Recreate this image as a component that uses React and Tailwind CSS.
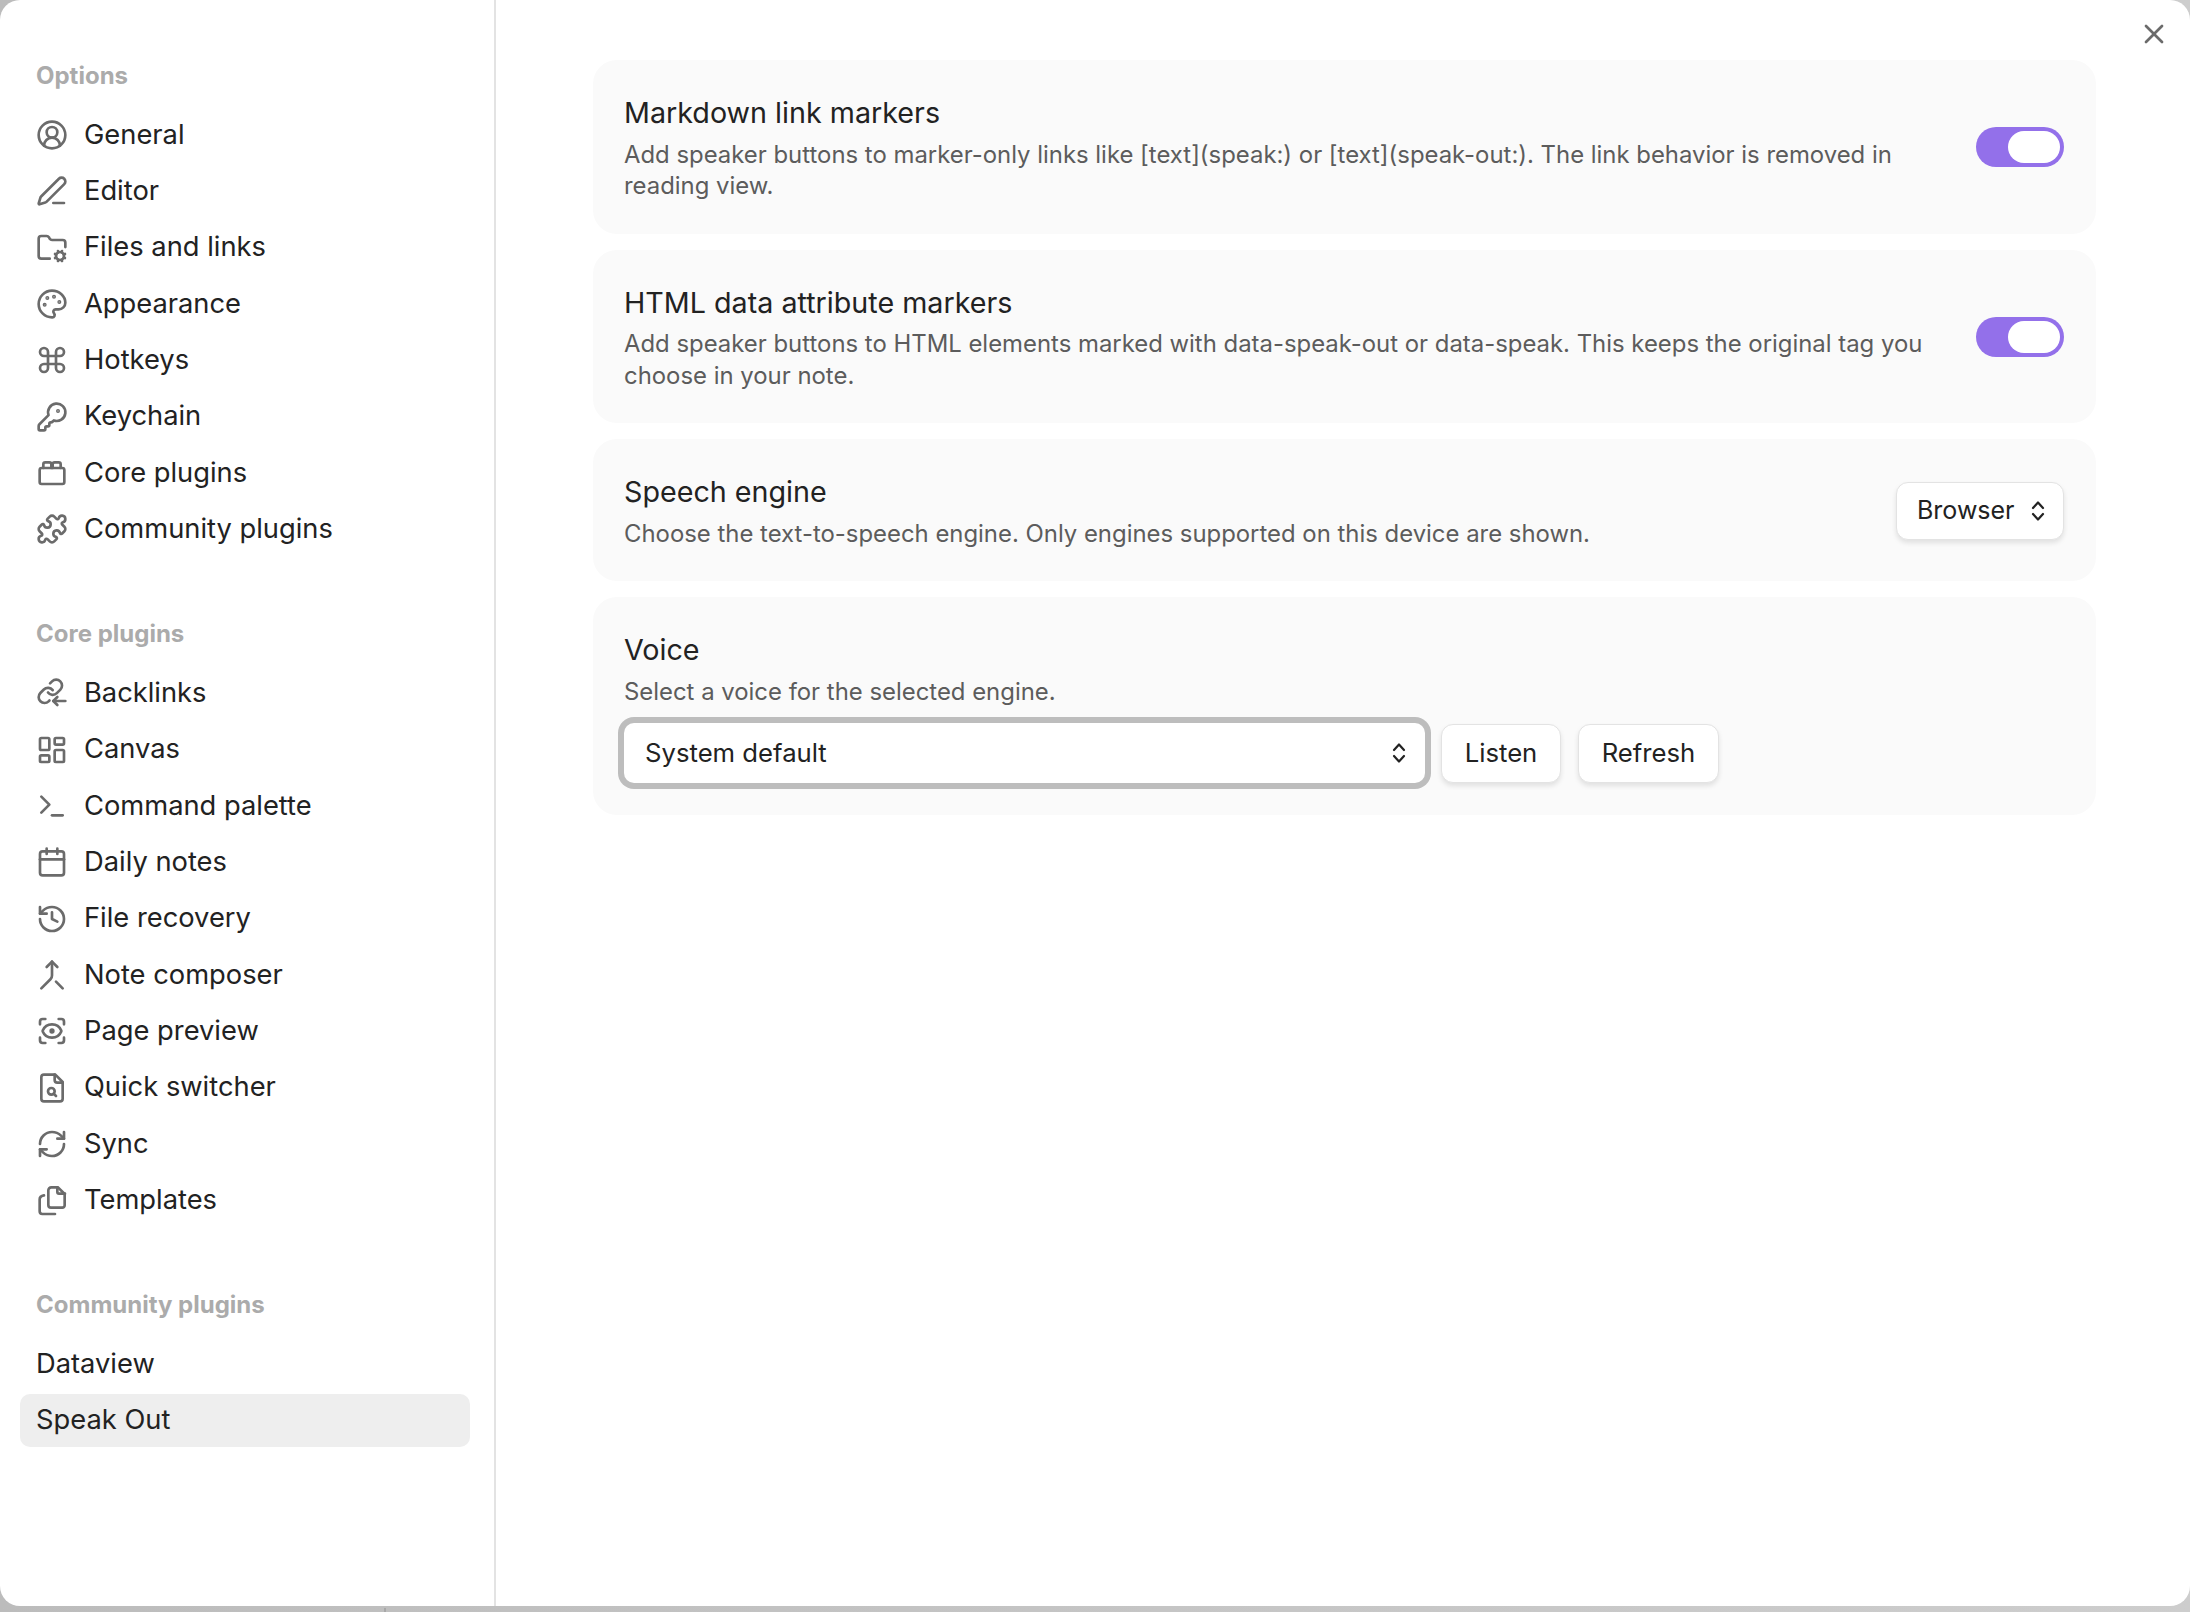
import React from 'react';
import {
  CircleUserRound, PenLine, FolderCog, Palette, Command, KeyRound, Puzzle,
  LayoutDashboard, Terminal, Calendar, History, Merge, ScanEye, RefreshCw, X,
} from 'lucide-react';

const Lego = ({ size, ...props }) => (
  <svg width={size} height={size} viewBox="0 0 24 24" fill="none" stroke="currentColor" strokeLinecap="round" strokeLinejoin="round" {...props}>
    <rect x="2.75" y="8.25" width="18.5" height="12" rx="1.5" />
    <path d="M5.5 8.25V5.5A1.5 1.5 0 0 1 7 4h3a1.5 1.5 0 0 1 1.5 1.5v2.75" />
    <path d="M12.5 8.25V5.5A1.5 1.5 0 0 1 14 4h3a1.5 1.5 0 0 1 1.5 1.5v2.75" />
  </svg>
);

const LinksComingIn = ({ size, strokeWidth, ...props }) => (
  <svg width={size} height={size} viewBox="0 0 24 24" fill="none" stroke="currentColor" strokeWidth={strokeWidth} strokeLinecap="round" strokeLinejoin="round" {...props}>
    <g transform="translate(0.2 0.2) scale(0.88)" strokeWidth={strokeWidth / 0.88}>
      <path d="M10 13a5 5 0 0 0 7.54.54l3-3a5 5 0 0 0-7.07-7.07l-1.72 1.71" />
      <path d="M14 11a5 5 0 0 0-7.54-.54l-3 3a5 5 0 0 0 7.07 7.07l.7-.7" />
    </g>
    <path d="M16 15l-3 3 3 3" />
    <path d="M13 18h9" />
  </svg>
);

const FileSearchInner = ({ size, ...props }) => (
  <svg width={size} height={size} viewBox="0 0 24 24" fill="none" stroke="currentColor" strokeLinecap="round" strokeLinejoin="round" {...props}>
    <path d="M14.5 2H6a2 2 0 0 0-2 2v16a2 2 0 0 0 2 2h12a2 2 0 0 0 2-2V7.5L14.5 2z" />
    <path d="M14 2v4a2 2 0 0 0 2 2h4" />
    <circle cx="11.5" cy="14.5" r="2.5" />
    <path d="M13.25 16.25 15 18" />
  </svg>
);

const FilesIcon = ({ size, ...props }) => (
  <svg width={size} height={size} viewBox="0 0 24 24" fill="none" stroke="currentColor" strokeLinecap="round" strokeLinejoin="round" {...props}>
    <path d="M6 8.5c-2 .3-3.25 1.2-3.25 3v9a2 2 0 0 0 2 2h9.5" />
    <path d="M16.5 2.5H11.5a2.25 2.25 0 0 0-2.25 2.25v11a2 2 0 0 0 2 2h8.5a1.75 1.75 0 0 0 1.75-1.75V7.5z" />
    <path d="M16 2.5v3.5A1.25 1.25 0 0 0 17.25 7.25h4.5" />
  </svg>
);

const Updown = ({ className }) => (
  <svg viewBox="0 0 14 22" fill="none" stroke="currentColor" strokeWidth="2.2" strokeLinecap="round" strokeLinejoin="round" className={className}>
    <path d="M2 8l5-5.5L12 8" />
    <path d="M2 14l5 5.5L12 14" />
  </svg>
);

const OPTIONS = [
  ['General', CircleUserRound],
  ['Editor', PenLine],
  ['Files and links', FolderCog],
  ['Appearance', Palette],
  ['Hotkeys', Command],
  ['Keychain', KeyRound],
  ['Core plugins', Lego],
  ['Community plugins', Puzzle],
];

const CORE = [
  ['Backlinks', LinksComingIn],
  ['Canvas', LayoutDashboard],
  ['Command palette', Terminal],
  ['Daily notes', Calendar],
  ['File recovery', History],
  ['Note composer', Merge],
  ['Page preview', ScanEye],
  ['Quick switcher', FileSearchInner],
  ['Sync', RefreshCw],
  ['Templates', FilesIcon],
];

function NavItem({ label, icon: Icon, active }) {
  return (
    <div className={`flex h-[53px] items-center gap-[16px] rounded-[10px] px-[16px] text-[27.3px] text-[#222222] ${active ? 'bg-[#eeeeee]' : ''}`}>
      {Icon && <Icon size={32} strokeWidth={2} className="shrink-0 text-[#6b6b6b]" />}
      <span>{label}</span>
    </div>
  );
}

function NavGroup({ title, items, className = '' }) {
  return (
    <div className={className}>
      <div className="h-[40px] px-[16px] text-[24px] font-[650] leading-[40px] text-[#ababab]">{title}</div>
      <div className="mt-[12.5px] flex flex-col gap-[3.33px]">{items}</div>
    </div>
  );
}

function Toggle() {
  return (
    <div className="flex h-[40px] w-[88px] shrink-0 items-center justify-end rounded-full bg-[#9370ea] pr-[4px]">
      <div className="h-[32px] w-[52px] rounded-full bg-white" />
    </div>
  );
}

function Setting({ name, desc, control }) {
  return (
    <div className="flex items-center rounded-[24px] bg-[#fafafa] pb-[32px] pl-[31px] pr-[32px] pt-[33px]">
      <div className="mr-[24px] flex-1">
        <div className="text-[28.7px] leading-[39px] text-[#222222]">{name}</div>
        <div className="mt-[6.5px] text-[23.9px] leading-[31.5px] text-[#5c5c5c]">{desc}</div>
      </div>
      {control}
    </div>
  );
}

const btn = 'flex items-center rounded-[12px] border-[1.5px] border-[#e3e3e3] bg-white text-[#222222] shadow-[0_3px_5px_rgba(0,0,0,0.1)]';

export default function App() {
  return (
    <div className="flex h-[1612px] w-[2190px] flex-col overflow-hidden bg-gradient-to-r from-[#bcbcbc] to-[#cdcdcd] font-['Inter',sans-serif]">
      <div className="relative flex h-[1606px] shrink-0 overflow-hidden rounded-[20px] bg-white">
        <aside className="h-full w-[496px] shrink-0 border-r-[2px] border-[#e3e3e3] pl-[20px] pr-[24px] pt-[56px]">
          <NavGroup title="Options" items={OPTIONS.map(([l, i]) => <NavItem key={l} label={l} icon={i} />)} />
          <NavGroup title="Core plugins" className="mt-[58.6px]" items={CORE.map(([l, i]) => <NavItem key={l} label={l} icon={i} />)} />
          <NavGroup
            title="Community plugins"
            className="mt-[58.6px]"
            items={[<NavItem key="d" label="Dataview" />, <NavItem key="s" label="Speak Out" active />]}
          />
        </aside>

        <main className="flex flex-1 flex-col gap-[16px] pl-[97px] pr-[94px] pt-[60px]">
          <Setting
            name="Markdown link markers"
            desc="Add speaker buttons to marker-only links like [text](speak:) or [text](speak-out:). The link behavior is removed in reading view."
            control={<Toggle />}
          />
          <Setting
            name="HTML data attribute markers"
            desc="Add speaker buttons to HTML elements marked with data-speak-out or data-speak. This keeps the original tag you choose in your note."
            control={<Toggle />}
          />
          <Setting
            name="Speech engine"
            desc="Choose the text-to-speech engine. Only engines supported on this device are shown."
            control={
              <div className={`${btn} h-[58px] w-[168px] justify-between pl-[20px] pr-[18px] text-[25px]`}>
                Browser
                <Updown className="h-[22px] w-[14px]" />
              </div>
            }
          />
          <div className="rounded-[24px] bg-[#fafafa] pb-[32px] pl-[31px] pr-[32px] pt-[33px]">
            <div className="text-[28.7px] leading-[39px] text-[#222222]">Voice</div>
            <div className="mt-[6.5px] text-[23.9px] leading-[31.5px] text-[#5c5c5c]">Select a voice for the selected engine.</div>
            <div className="mt-[16px] flex items-center">
              <div className="flex h-[60px] w-[801px] items-center justify-between rounded-[10px] bg-white pl-[21px] pr-[19px] text-[25.7px] text-[#222222] ring-[6px] ring-[#bdbdbd]">
                System default
                <Updown className="h-[22px] w-[14px]" />
              </div>
              <div className={`${btn} ml-[16px] h-[59px] w-[120px] justify-center text-[25.7px]`}>Listen</div>
              <div className={`${btn} ml-[17px] h-[59px] w-[141px] justify-center text-[25.7px]`}>Refresh</div>
            </div>
          </div>
        </main>

        <X size={32} strokeWidth={2} className="absolute right-[20px] top-[18px] text-[#6b6b6b]" />
      </div>
      <div className="flex-1 pl-[384px] pt-[2px]">
        <div className="h-full w-[2px] bg-[#a8a8a8]" />
      </div>
    </div>
  );
}
